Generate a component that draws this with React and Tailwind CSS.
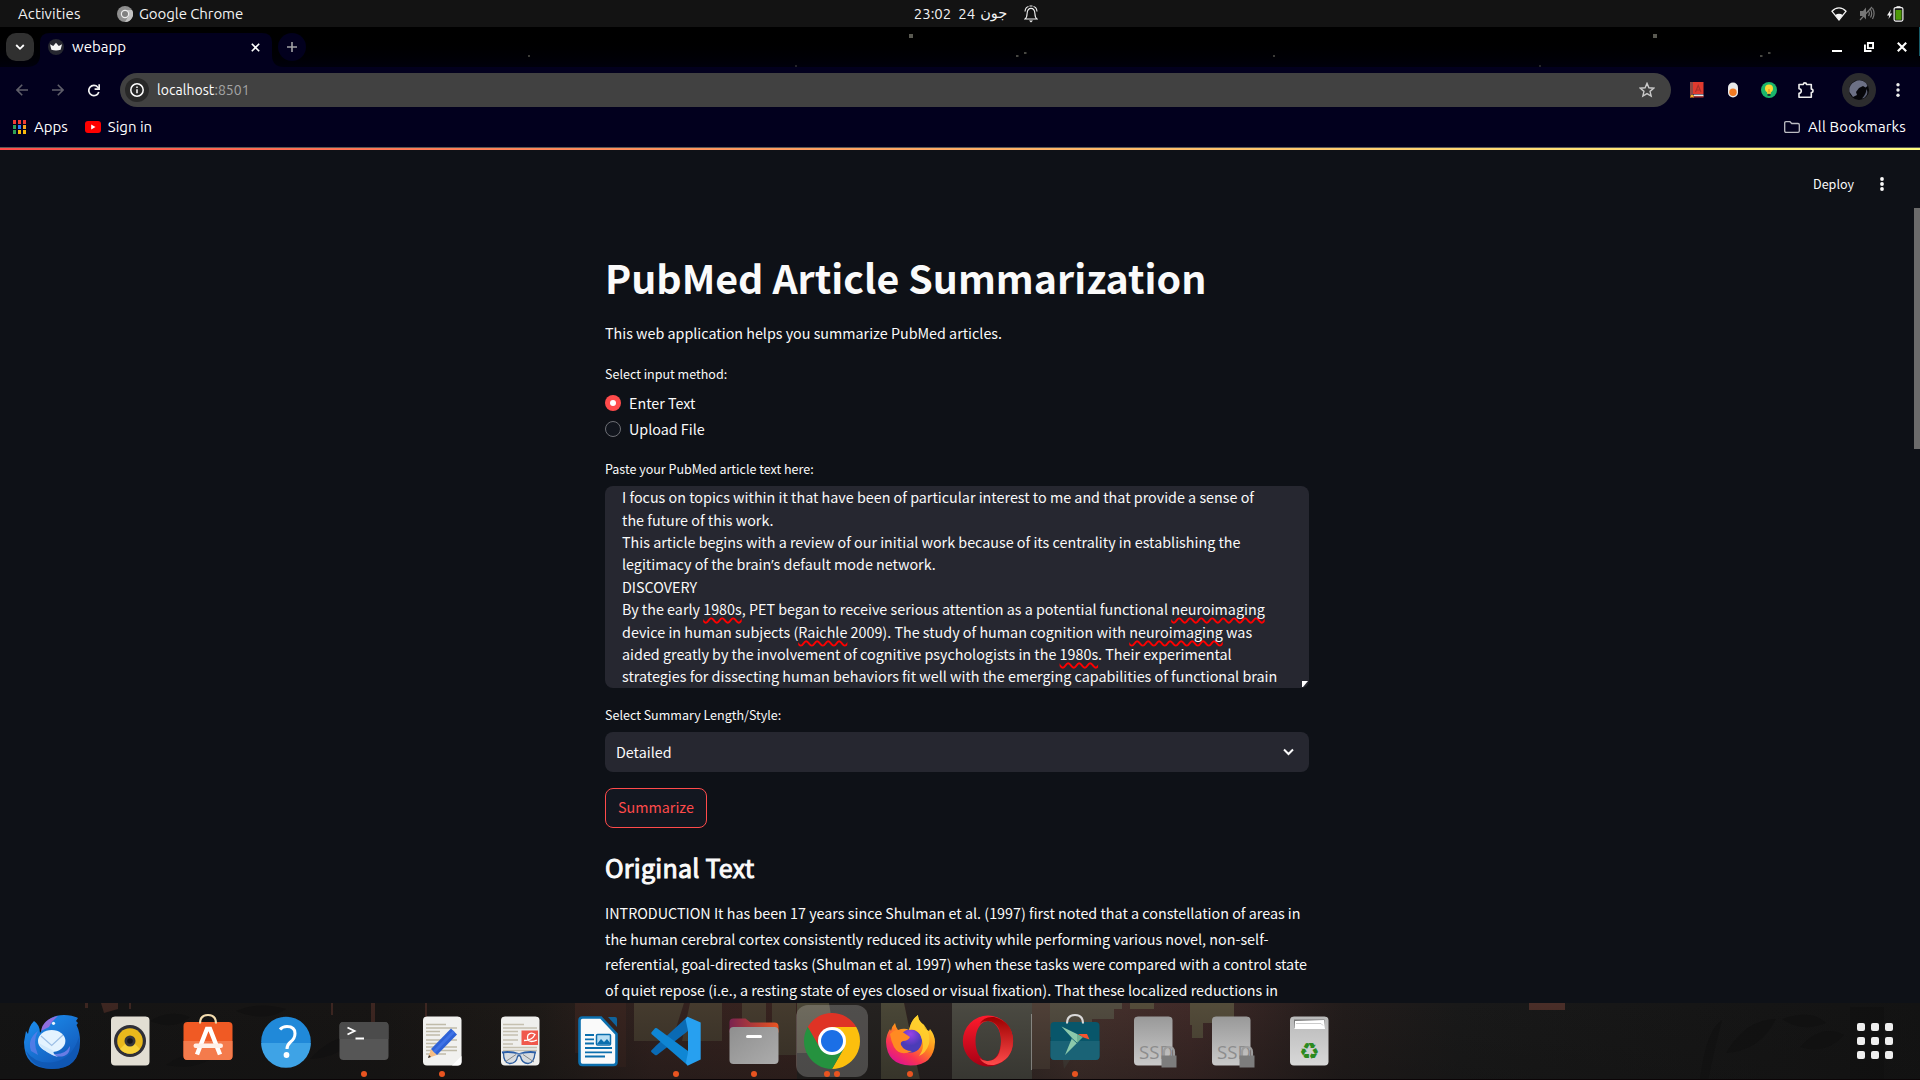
import React from "react";

const UI = "font-[Ubuntu,'Noto_Sans',sans-serif]";
const PAGE = "font-['Noto_Sans_CJK_SC',sans-serif]";

function TopBar() {
  return (
    <div className="grid h-[27px] shrink-0 grid-cols-3 items-center bg-[#131313] text-[15px] leading-[27px] text-[#f2f2f2]">
      <div className="flex items-center pl-[18px]">
        <span className="w-[99px] tracking-[0.1px]">Activities</span>
        <svg className="mr-1.5 h-4 w-4" viewBox="0 0 16 16">
          <circle cx="8" cy="8" r="8" fill="#8f8f8f" />
          <path d="M8 4h7A8 8 0 0 1 8 16l3.5-6z" fill="#c2c2c2" />
          <circle cx="8" cy="8" r="4.2" fill="#ededed" />
          <circle cx="8" cy="8" r="3" fill="#808080" />
        </svg>
        <span className="tracking-[-0.08px]">Google Chrome</span>
      </div>
      <div className="flex items-center justify-center pl-[32px]">
        <span>23:02</span>
        <span className="ml-[7px]">24</span>
        <span className="ml-[5px] font-['DejaVu_Sans'] text-[14.5px]" dir="rtl">جون</span>
        <svg className="ml-[17px] h-[18px] w-[14px]" viewBox="0 0 14 18" fill="none" stroke="#f2f2f2" strokeWidth="1.1">
          <path d="M1 14c1.6-1 2-3 2.1-5.500C3.300 5 4.400 3.400 7 3.400S10.700 5 10.900 8.500C11 11 11.400 13 13 14z" />
          <path d="M1 6.500C1.200 3.800 2.500 2 4.500 1.500M13 6.500C12.800 3.800 11.500 2 9.500 1.500M5.500 1h3" />
          <path d="M5 15.500h4l-2 2z" fill="#f2f2f2" stroke="none" />
        </svg>
      </div>
      <div className="flex items-center justify-end pr-4">
        <svg className="h-[14px] w-4" viewBox="0 0 16 14">
          <path d="M1 4.300C5-.3 11-.3 15 4.300L8 13z" fill="none" stroke="#f2f2f2" strokeWidth="1.300" />
          <path d="M4.300 8C6.500 6.300 9.500 6.300 11.700 8L8 13z" fill="#f2f2f2" />
        </svg>
        <svg className="ml-3 h-[15px] w-4" viewBox="0 0 16 15" fill="none" stroke="#777" strokeWidth="1.200">
          <path d="M1 5h3l3-3.500v12L4 10H1z" fill="#777" stroke="none" />
          <path d="M1 14 13 1M9.500 5c1 1.500 1 3.500 0 5M11.500 3.500c1.500 2.500 1.500 5.500 0 8M13.500 2c2 3.500 2 7.500 0 11" />
        </svg>
        <svg className="ml-3 h-[16px] w-[17px]" viewBox="0 0 17 16">
          <path d="M3.800 3.500 0 9.500h2.200L1.500 13 5.200 7.500H3z" fill="#f2f2f2" />
          <path d="M9.500.2h4v1.500h-4z" fill="#f2f2f2" />
          <rect x="7.100" y="1.600" width="8.800" height="13.500" rx="1.500" fill="#131313" stroke="#f2f2f2" strokeWidth="1.200" />
          <rect x="8.500" y="4" width="6" height="9.800" fill="#4e9a06" />
        </svg>
      </div>
    </div>
  );
}

function TabStrip() {
  return (
    <div className="relative flex h-10 shrink-0 items-center bg-linear-to-b from-black to-[#00000c] pl-1.5">
      <svg className="absolute inset-0 h-10 w-full" viewBox="0 0 1920 40">
        <g fill="#77776c">
          <rect x="909" y="7" width="4" height="4" opacity=".75" />
          <rect x="1653" y="7" width="4" height="4" opacity=".75" />
          <rect x="1016" y="28" width="2.500" height="2" opacity=".6" />
          <rect x="1024" y="25" width="2.500" height="2" opacity=".6" />
          <rect x="1760" y="28" width="2.500" height="2" opacity=".6" />
          <rect x="1768" y="25" width="2.500" height="2" opacity=".6" />
          <rect x="528" y="28" width="2" height="2" opacity=".5" />
          <rect x="795" y="38" width="2" height="2" opacity=".3" />
          <rect x="1273" y="28" width="2" height="2" opacity=".5" />
          <rect x="1539" y="38" width="2" height="2" opacity=".3" />
        </g>
        <rect x="1919" y="0" width="1" height="29" fill="#165b68" />
        <path d="M26 40Q40 40 40 28V15Q40 6 50 6H262Q272 6 272 15V28Q272 40 284 40Z" fill="#02001e" />
      </svg>
      <div className="relative flex h-7 w-7 items-center justify-center rounded-[10px] bg-[#303030]">
        <svg className="h-2 w-[10px]" viewBox="0 0 10 8" fill="none" stroke="#fff" strokeWidth="1.800">
          <path d="m1.200 2 3.800 3.800L8.800 2" />
        </svg>
      </div>
      <div className="relative ml-3.5 flex w-[212px] items-center">
        <svg className="h-4 w-4" viewBox="0 0 16 16">
          <circle cx="8" cy="8" r="8" fill="#262730" />
          <path d="M2 5.200 5.200 7 8 3.700 10.800 7 14 5.200 12.600 10.800Q8 12 3.400 10.800z" fill="#f5f5f5" />
        </svg>
        <span className="ml-2 text-[15px] leading-5 text-white">webapp</span>
        <svg className="ml-auto h-[9px] w-[9px]" viewBox="0 0 9 9" stroke="#fff" strokeWidth="1.600">
          <path d="m.8.8 7.400 7.400M8.200.8.8 8.200" />
        </svg>
      </div>
      <div className="relative ml-[18px] flex h-7 w-7 items-center justify-center rounded-full bg-[#02001e]">
        <svg className="h-[10px] w-[10px]" viewBox="0 0 10 10" stroke="#a2a2a6" strokeWidth="1.600">
          <path d="M5 0v10M0 5h10" />
        </svg>
      </div>
      <div className="relative ml-auto mr-[13px] flex items-center">
        <span className="mt-2 h-[2px] w-2.5 bg-white" />
        <svg className="ml-[22px] h-[10px] w-[10px]" viewBox="0 0 10 10" fill="none" stroke="#fff" strokeWidth="1.900">
          <path d="M3.900.95h5.150v5.150H3.900zM.95 2.500v6.550H7.500" />
        </svg>
        <svg className="ml-[23px] h-[10px] w-[10px]" viewBox="0 0 10 10" stroke="#fff" strokeWidth="2.100">
          <path d="m.8.8 8.400 8.400M9.200.8.8 9.200" />
        </svg>
      </div>
    </div>
  );
}

function Toolbar() {
  return (
    <div className="flex h-[46px] shrink-0 items-center bg-[#02001e]">
      <svg className="ml-4 h-3 w-3" viewBox="0 0 12 12" fill="none" stroke="#5f5e69" strokeWidth="1.600">
        <path d="M12 6H1M6.200.8 1 6l5.200 5.200" />
      </svg>
      <svg className="ml-6 h-3 w-3" viewBox="0 0 12 12" fill="none" stroke="#5f5e69" strokeWidth="1.600">
        <path d="M0 6h11M5.800.8 11 6l-5.200 5.200" />
      </svg>
      <svg className="ml-6 h-[13px] w-3" viewBox="0 0 12 13" fill="none" stroke="#f2f2f2" strokeWidth="1.700">
        <path d="M10.800 8A5.100 5.100 0 1 1 9.800 3.200L11 4.600" />
        <path d="M11.200.3v4.800H6.600" />
      </svg>
      <div className="ml-5 flex h-[34px] w-[1551px] items-center rounded-full bg-[#414141] pl-[5px]">
        <div className="flex h-6 w-6 items-center justify-center rounded-full bg-[#282828]">
          <svg className="h-[14px] w-[14px]" viewBox="0 0 14 14" fill="none" stroke="#fff">
            <circle cx="7" cy="7" r="6.200" strokeWidth="1.500" />
            <path d="M7 6.200v4M7 3.600v1.500" strokeWidth="1.500" />
          </svg>
        </div>
        <span className="ml-2 text-[14px] leading-5 tracking-[0.05px] text-white">localhost<span className="text-[#a5a5a5]">:8501</span></span>
        <svg className="ml-auto mr-4 h-4 w-4" viewBox="0 0 16 16" fill="none" stroke="#c9c9c9" strokeWidth="1.400">
          <path d="m8 1.400 1.900 4.400 4.800.4-3.650 3.150 1.100 4.700L8 11.550 3.850 14.050l1.100-4.700L1.300 6.200l4.800-.4z" />
        </svg>
      </div>
      <svg className="ml-[18px] h-4 w-[15px]" viewBox="0 0 15 16">
        <path d="M1 0h13.500v12H1z" fill="#e03a2e" />
        <path d="M1 0h3v13H1z" fill="#8a4a45" />
        <path d="M4.500 12.500h10v2h-10z" fill="#e8e8e8" />
        <path d="M1 14.300h13.500v1.200H1z" fill="#b92a22" />
        <path d="M1.500 13h3v3L3 15l-1.500 1z" fill="#f0b429" />
        <path d="m6.500 10 2.700-6.500L12 10M7.500 8h3.500" fill="none" stroke="#a8302a" strokeWidth="1.100" />
      </svg>
      <svg className="ml-[23px] h-4 w-[12px]" viewBox="0 0 12 16">
        <rect x="1" y=".5" width="10" height="15" rx="5" fill="#e9e9e9" />
        <circle cx="6" cy="10.300" r="3.700" fill="#f17a22" />
      </svg>
      <svg className="ml-[22px] h-4 w-4" viewBox="0 0 16 16">
        <circle cx="8" cy="8" r="8" fill="#1bb56b" />
        <circle cx="8" cy="6.500" r="4" fill="#fcd535" />
        <path d="M6 9.500h4v2.300H6z" fill="#f3c130" />
        <path d="M6.500 12h3v2h-3z" fill="#1c3c34" />
        <path d="M8 7v3" stroke="#f08c1f" strokeWidth="1.200" />
      </svg>
      <svg className="ml-5 h-[17px] w-[17px]" viewBox="0 0 17 17" fill="none" stroke="#eee" strokeWidth="1.600" strokeLinejoin="round">
        <path d="M2 2.500h4.300a1.600 1.600 0 0 1 3.200 0h4.800v4.600a1.700 1.700 0 0 1 0 3.400v4.700H2v-3.900a2.300 2.300 0 0 0 0-4.600z" />
      </svg>
      <div className="ml-7 flex h-[34px] w-[34px] items-center justify-center rounded-full bg-[#2c2c2e]">
        <svg className="h-5 w-5" viewBox="0 0 20 20">
          <circle cx="10" cy="10" r="10" fill="#06060a" />
          <path d="M.5 12A10 10 0 0 1 17 3l1.500 3-2 1.500L14 6l-4 2-3 4 1 3-4 2z" fill="#6c7085" />
          <path d="M17.500 9q2 4-.5 7-2 2.500-4 2.500 4-4 4.500-9.500z" fill="#5a5f73" />
        </svg>
      </div>
      <svg className="ml-5 h-[14px] w-[4px]" viewBox="0 0 4 14" fill="#eee">
        <circle cx="2" cy="1.800" r="1.700" /><circle cx="2" cy="7" r="1.700" /><circle cx="2" cy="12.200" r="1.700" />
      </svg>
    </div>
  );
}

const APP_DOTS = [
  "bg-[#f23c32]", "bg-[#f23c32]", "bg-[#f23c32]",
  "bg-[#2fa156]", "bg-[#2d7df6]", "bg-[#f6a51c]",
  "bg-[#2fa156]", "bg-[#f9b90c]", "bg-[#f9b90c]",
];

function BookmarksBar() {
  return (
    <div className="flex h-[34px] shrink-0 items-center bg-[#02001e] pb-[6px] text-[15px] leading-5 text-white">
      <div className="ml-[13px] grid grid-cols-3 gap-x-[2px] gap-y-px">
        {APP_DOTS.map((c, i) => (
          <span key={i} className={"h-1 w-[3px] " + c} />
        ))}
      </div>
      <span className="ml-2">Apps</span>
      <svg className="ml-[17px] h-3 w-4" viewBox="0 0 16 12">
        <rect width="16" height="12" rx="3" fill="#f00" />
        <path d="m6.200 3.500 4.300 2.500-4.300 2.500z" fill="#fff" />
      </svg>
      <span className="ml-[7px]">Sign in</span>
      <svg className="ml-auto h-3 w-4" viewBox="0 0 16 12" fill="none" stroke="#bcbcc2" strokeWidth="1.300">
        <path d="M.7 2Q.7.700 2 .7h4l1.700 1.800H14q1.300 0 1.300 1.300V10q0 1.300-1.300 1.300H2Q.7 11.300.7 10z" />
      </svg>
      <span className="ml-2 mr-[14px] tracking-[0.15px]">All Bookmarks</span>
    </div>
  );
}

function Wavy({ children }) {
  return <span className="underline decoration-[#ff0000] decoration-wavy decoration-[1.6px] underline-offset-[1.5px] [text-decoration-skip-ink:none]">{children}</span>;
}

function Radio({ label, checked }) {
  return (
    <div className="flex h-[26px] items-center">
      {checked ? (
        <span className="flex h-4 w-4 items-center justify-center rounded-full bg-[#ff4b4b]">
          <span className="h-1.5 w-1.5 rounded-full bg-white" />
        </span>
      ) : (
        <span className="h-4 w-4 rounded-full border border-[#6d6f75] bg-[#11151d]" />
      )}
      <span className="ml-2 text-[14.32px] leading-[26px]">{label}</span>
    </div>
  );
}

function WebPage() {
  return (
    <div className={"relative flex-1 overflow-hidden bg-[#0e1117] text-[#fafafa] " + PAGE}>
      <div className="h-px bg-[#5a5957]" />
      <div className="h-0.5 bg-linear-to-r from-[#ff4b4b] to-[#fffd80]" />
      <header className="flex h-[60px] items-center justify-end pt-2 pr-9">
        <span className="text-[12.53px] leading-5">Deploy</span>
        <svg className="ml-[26px] h-[14px] w-[4px]" viewBox="0 0 4 14" fill="#fafafa">
          <circle cx="2" cy="2" r="1.900" /><circle cx="2" cy="7" r="1.900" /><circle cx="2" cy="12" r="1.900" />
        </svg>
      </header>
      <div className="absolute right-0 top-[61px] h-[241px] w-[6px] bg-[#6b6b6b]" />
      <main className="ml-[605px] w-[704px] whitespace-nowrap pt-[41px]">
        <h1 className="h-[52px] text-[39.36px] font-bold leading-[52px]">PubMed Article Summarization</h1>
        <p className="mt-[17px] text-[14.32px] leading-[26px]">This web application helps you summarize PubMed articles.</p>
        <p className="mt-[18px] text-[12.53px] leading-5">Select input method:</p>
        <div className="mt-1.5">
          <Radio label="Enter Text" checked />
          <Radio label="Upload File" />
        </div>
        <p className="mt-[17px] text-[12.53px] leading-5">Paste your PubMed article text here:</p>
        <div className="relative mt-[7px] h-[202px] overflow-hidden rounded-lg bg-[#262730] pl-[17px] pt-[0.2px] text-[14.33px] leading-[22.4px]">
          <div>I focus on topics within it that have been of particular interest to me and that provide a sense of</div>
          <div>the future of this work.</div>
          <div>This article begins with a review of our initial work because of its centrality in establishing the</div>
          <div>legitimacy of the brain<span className="font-['Noto_Sans'] text-[13.5px] leading-none">’</span>s default mode network.</div>
          <div>DISCOVERY</div>
          <div>By the early <Wavy>1980s</Wavy>, PET began to receive serious attention as a potential functional <Wavy>neuroimaging</Wavy></div>
          <div>device in human subjects (<Wavy>Raichle</Wavy> 2009). The study of human cognition with <Wavy>neuroimaging</Wavy> was</div>
          <div>aided greatly by the involvement of cognitive psychologists in the <Wavy>1980s</Wavy>. Their experimental</div>
          <div>strategies for dissecting human behaviors fit well with the emerging capabilities of functional brain</div>
          <svg className="absolute bottom-[1px] right-[1px] h-[6px] w-[6px]" viewBox="0 0 6 6"><path d="M0 0h6L1 6H0z" fill="#fff" /></svg>
        </div>
        <p className="mt-[17px] text-[12.53px] leading-5">Select Summary Length/Style:</p>
        <div className="mt-[7px] flex h-10 items-center justify-between rounded-lg bg-[#262730] pl-[11px] pr-[15px]">
          <span className="text-[14.32px] leading-6">Detailed</span>
          <svg className="h-2 w-[11px]" viewBox="0 0 11 8" fill="none" stroke="#fafafa" strokeWidth="2">
            <path d="m1 1.500 4.500 4.500L10 1.500" />
          </svg>
        </div>
        <button className="mt-4 block h-10 w-[102px] rounded-lg border border-[#ff4b4b] bg-[#131720] pb-0.5 text-[14.32px] leading-6 text-[#ff4b4b]">Summarize</button>
        <h3 className="mt-[22px] text-[25.06px] font-normal leading-[34px] tracking-[0.24px] [-webkit-text-stroke:1px_#fafafa]">Original Text</h3>
        <div className="mt-4 text-[14.33px] leading-[25.6px]">
          <div>INTRODUCTION It has been 17 years since Shulman et al. (1997) first noted that a constellation of areas in</div>
          <div>the human cerebral cortex consistently reduced its activity while performing various novel, non-self-</div>
          <div>referential, goal-directed tasks (Shulman et al. 1997) when these tasks were compared with a control state</div>
          <div>of quiet repose (i.e., a resting state of eyes closed or visual fixation). That these localized reductions in</div>
        </div>
      </main>
    </div>
  );
}

function Wallpaper() {
  return (
    <svg className="absolute inset-0 h-full w-full" viewBox="0 0 1920 77" preserveAspectRatio="none">
      <defs>
        <linearGradient id="wp" x1="0" x2="1">
          <stop offset="0" stopColor="#141414" />
          <stop offset=".2" stopColor="#171514" />
          <stop offset=".28" stopColor="#1e1a17" />
          <stop offset=".34" stopColor="#33221f" />
          <stop offset=".42" stopColor="#38231f" />
          <stop offset=".5" stopColor="#2b2321" />
          <stop offset=".56" stopColor="#45322d" />
          <stop offset=".62" stopColor="#402a28" />
          <stop offset=".7" stopColor="#221c1b" />
          <stop offset=".76" stopColor="#191919" />
          <stop offset="1" stopColor="#131313" />
        </linearGradient>
        <linearGradient id="wps" x1="0" y1="0" x2="0" y2="1">
          <stop offset="0" stopColor="#111" stopOpacity="0" />
          <stop offset="1" stopColor="#111" stopOpacity=".35" />
        </linearGradient>
      </defs>
      <rect width="1920" height="77" fill="url(#wp)" />
      <g fill="#3d2621">
        <path d="M85 0h3v5h-3zM101 0h17v6l-14 4zM129 0h2v6h-2zM331 0h2v12h-2zM371 0h4v24h-4zM425 0h2v26h-2z" />
        <path d="M575 0h51v64h-16V50h-35z" opacity=".7" />
        <path d="M1529 0h36v7h-36z" fill="#4a2e28" />
      </g>
      <path d="M634 0h50l-12 38H634zM690 0h32v38h-40zM742 0h24v38h-24zM772 0h24v52h-24z" fill="#453b2e" />
      <path d="M797 0h84v77h-84z" fill="#252220" />
      <path d="M797 0h32l8 50H797z" fill="#4b4636" />
      <path d="M881 0h23l16 77h-39z" fill="#4a4737" />
      <path d="M905 0h47v77h-31z" fill="#2a2322" />
      <path d="M952 0h80v77h-80z" fill="#4b4a42" />
      <path d="M1032 0h18v66h-18z" fill="#4f4037" />
      <path d="M1050 0h72v6h-8v10h-22v18H1050z" fill="#524c40" />
      <path d="M1130 0h24v6h-24zM1190 0h44v20h-31v15h-11V22h-2z" fill="#544c3a" />
      <path d="M1060 34h12v20l-8 12z" fill="#4a4740" opacity=".7" />
      <g fill="#0e0e0e" opacity=".5">
        <path d="M20 44q24-18 50-12-20 18-50 12zM150 18q20-12 40-4-16 14-40 4zM236 8q24-10 50-2-20 14-50 2zM310 56q20-22 44-24-10 22-44 24zM166 62q24-18 48-8-20 14-48 8z" />
        <path d="M1700 77q6-50 22-60-8 30-14 60zM1726 50q20-34 50-34-16 32-50 34zM1782 16q30-10 44 4-24 10-44-4zM1800 44q22-24 44-12-18 20-44 12zM1850 4h34v73h-34z" />
      </g>
      <rect width="1920" height="77" fill="url(#wps)" />
      <rect y="76" width="1920" height="1" fill="#0b0507" />
    </svg>
  );
}

function Glyph({ children }) {
  return <svg className="h-14 w-14 overflow-visible" viewBox="0 0 56 56">{children}</svg>;
}

const Thunderbird = (
  <Glyph>
    <defs>
      <linearGradient id="tb" x1="0" y1="0" x2=".7" y2="1"><stop offset="0" stopColor="#1d93f3" /><stop offset="1" stopColor="#1257b8" /></linearGradient>
    </defs>
    <path d="M10 8Q16 12 16 20L19 15Q24 2 40 2 48 2 54 5L52 8 54 10 52.500 12Q56 19 56 28 56 56 28 56 0 56 0 29L2 18 4 21Q5 13 10 8z" fill="url(#tb)" />
    <path d="M2 38Q12 52 30 49 48 46 55 24 58 56 28 56 8 55 2 38z" fill="#0f55b0" opacity=".75" />
    <path d="M17 18Q19 6 34 3 27 9 25 14z" fill="#8f6fe0" />
    <path d="M7 38Q3 26 14 18 8 28 14 42z" fill="#5e7de8" opacity=".8" />
    <path d="M25 40Q40 44 46 33 46 46 30 43z" fill="#7d83ee" opacity=".8" />
    <ellipse cx="27.700" cy="28" rx="13.700" ry="11" fill="#e4f3ff" />
    <path d="M14.500 30Q20 40 34 44 28 41 30 38z" fill="#cfe8fd" />
    <path d="m17 23 10.700 9.500L39 22" fill="none" stroke="#9dbfe6" strokeWidth="1.200" />
    <circle cx="29.500" cy="10.300" r="1.600" fill="#e8f5ff" />
  </Glyph>
);

const Rhythmbox = (
  <Glyph>
    <rect x="9" y="3.500" width="38.500" height="49" rx="4" fill="#e2ded3" />
    <circle cx="28" cy="28" r="16" fill="#2f2f38" />
    <circle cx="28" cy="28" r="12.800" fill="#e9b91c" />
    <path d="M18 36a12.800 12.800 0 0 0 20 0l-6-6h-8z" fill="#f7d23a" />
    <circle cx="28" cy="28" r="5.500" fill="#35363a" />
    <circle cx="28" cy="28" r="2.800" fill="#15161a" />
  </Glyph>
);

const Software = (
  <Glyph>
    <rect x="3.500" y="9" width="49" height="38" rx="4" fill="#f05a24" />
    <path d="M3.500 28h49v15q0 4-4 4h-41q-4 0-4-4z" fill="#f47b4c" />
    <path d="M20 10.500q0-8.500 8-8.500t8 8.500" fill="none" stroke="#f3dcae" strokeWidth="2" />
    <path d="M17 41.500 27 16h3l10 25.500" fill="none" stroke="#fff" strokeWidth="4.400" />
    <rect x="13.500" y="30.500" width="29.500" height="4.500" rx="2.200" fill="#fff0e8" />
  </Glyph>
);

const Help = (
  <Glyph>
    <circle cx="28" cy="28.500" r="24.800" fill="#2089d9" />
    <path d="M3.200 30a24.800 24.800 0 0 0 49.600 0z" fill="#3ea3e6" />
    <path d="M22 16.500q2.500-3 7-3 8 0 8 7 0 5-4.500 8.500-3.500 3-3.500 7" fill="none" stroke="#fff" strokeWidth="3" />
    <circle cx="28.500" cy="42" r="2.900" fill="#fff" />
  </Glyph>
);

const Terminal = (
  <Glyph>
    <rect x="3.500" y="9" width="49" height="38" rx="4" fill="#565656" />
    <path d="M3.500 26V13q0-4 4-4h41q4 0 4 4v13z" fill="#4b4b4b" />
    <path d="m11.500 14.500 7 3.500-7 3.500M19.500 25.500H28" fill="none" stroke="#fff" strokeWidth="1.900" />
  </Glyph>
);

const Gedit = (
  <Glyph>
    <rect x="9" y="3.500" width="38.500" height="49" rx="4" fill="#f1f1ef" />
    <path d="M12 11.500h20M12 15h31M12 18.500h14M12 22h14M12 27h31M12 30.500h14M12 34h31M12 37.500h31M12 41h20" stroke="#c0bba9" strokeWidth="1.300" />
    <path d="M14 45 17 36l6 6z" fill="#f5bd83" />
    <path d="M17 36 37 15.500l6 6L23 42z" fill="#2f62d6" />
    <path d="M19 38 39 17.500l2 2L21 40z" fill="#3f72e6" />
    <path d="m14 45 1-3 2 2z" fill="#333" />
    <path d="M38 52.500 47.500 43v6q0 3.500-4 3.500z" fill="#fff" />
  </Glyph>
);

const DocViewer = (
  <Glyph>
    <rect x="9" y="3.500" width="38.500" height="49" rx="4" fill="#efefed" />
    <path d="M11 11.500h21M11 15h34M11 18.500h15M11 22h15M11 27h15M11 31h10M11 34.500h34M11 37.500h34" stroke="#c5c0b0" strokeWidth="1.400" />
    <rect x="29.500" y="17.500" width="16.500" height="14.500" fill="#f0584c" />
    <path d="M32 27.500q8 0 11-6-4-3-7 .5-2 5 3 6.500 3 0 6-1.500" fill="none" stroke="#fff" strokeWidth="1.300" />
    <path d="M10 39.500Q18 38 27 41q9-3 17-1.500" fill="none" stroke="#2a5ea8" strokeWidth="1.800" />
    <path d="M11.500 40q0 10.500 6.500 10.500t7.500-7q1.500-2 3 0 1.500 7 7.500 7T43 40" fill="#a9b7c9" fillOpacity=".35" stroke="#2c5c9e" strokeWidth="1.300" />
    <path d="M13 49 24 41.500M31 41.500 42 49" stroke="#888" strokeWidth="1" />
  </Glyph>
);

const Writer = (
  <Glyph>
    <path d="M12.500 4.500H31L46.500 21v28q0 3-3 3h-31q-3 0-3-3V7.500q0-3 3-3z" fill="#fafafa" stroke="#0c6fae" strokeWidth="2.600" />
    <path d="M38 4h7q2 0 2 2v8z" fill="#0f639c" />
    <path d="M15 22h9M15 26.300h9M15 30.500h9M15 35h27M15 39.300h27M15 43.500h20" stroke="#0c6fae" strokeWidth="1.800" />
    <rect x="26.500" y="21.500" width="14" height="10.500" rx="1" fill="#b8def3" stroke="#0c6fae" strokeWidth="1.500" />
    <path d="m27 31 4-5 3 3 3-3 4 5z" fill="#0c6fae" />
  </Glyph>
);

const VSCode = (
  <Glyph>
    <path d="M39.500 3.800 7.700 33 3.300 37.500q-.5 1 0 1.500l3.700 3q1 .5 2 0L40 18z" fill="#0a6ab4" />
    <path d="M39.500 52.200 3.500 21q-.5-1 0-1.700L7 15.300q1-.5 2 0L40 38z" fill="#0f86d4" />
    <path d="M39.500 3.800 52.700 9.500v37L39.500 52.700 38 50 40 38V18L37.500 6z" fill="#27a0f0" />
  </Glyph>
);

const Files = (
  <Glyph>
    <defs>
      <linearGradient id="fl"><stop offset="0" stopColor="#7a2350" /><stop offset="1" stopColor="#ea5420" /></linearGradient>
      <linearGradient id="fg" x1="0" y1="0" x2="1" y2="1"><stop offset="0" stopColor="#8f8f8f" /><stop offset="1" stopColor="#acacac" /></linearGradient>
    </defs>
    <path d="M3.500 9q0-3.500 4-3.500h12l5 4h24q4 0 4 4v6h-49z" fill="url(#fl)" />
    <rect x="3.500" y="14" width="49" height="37" rx="4" fill="url(#fg)" />
    <rect x="20" y="22" width="16" height="3" rx="1.500" fill="#fff" />
  </Glyph>
);

const Chrome = (
  <Glyph>
    <path d="M3.750 14A28 28 0 0 1 52.250 14H28L15.900 35z" fill="#df3325" />
    <path d="M52.250 14A28 28 0 0 1 28 56L40.100 35 28 14z" fill="#fcbf0d" />
    <path d="M28 56A28 28 0 0 1 3.750 14L15.900 35 28 42 40.100 35z" fill="#25923f" />
    <circle cx="28" cy="28" r="14" fill="#fff" />
    <circle cx="28" cy="28" r="11" fill="#1b6fe6" />
  </Glyph>
);

const Firefox = (
  <Glyph>
    <defs>
      <linearGradient id="ff" x1=".8" y1=".1" x2=".25" y2=".95"><stop offset="0" stopColor="#ffe22e" /><stop offset=".45" stopColor="#ff8a1d" /><stop offset=".75" stopColor="#fb3550" /><stop offset="1" stopColor="#e0168b" /></linearGradient>
      <radialGradient id="fp" cx=".5" cy=".2"><stop offset="0" stopColor="#9a42e8" /><stop offset="1" stopColor="#4b3cb8" /></radialGradient>
    </defs>
    <path d="M13 10Q14 15 16 17l3-1Q24 15 27 17L28 14Q30 6 36 2 36 8 42 12L43 16 47 18 48 16Q53 22 53 29 52 52.500 28.500 52.500 5 52 4 29 4 22 8 16L9 18Q10 13 13 10z" fill="url(#ff)" />
    <circle cx="28.500" cy="28" r="11.500" fill="url(#fp)" />
    <path d="M8 21Q14 15 19 18L28 24Q26 28 21 28 18 29 19 32 22 38 30 38 18 44 12 34 9 28 8 21z" fill="#ff8a22" />
    <path d="M36 2Q36 8 42 12 49 20 47 31q-3 9-10 12 6-8 3-16Q38 19 33 17q-4-1-6 0Q29 7 36 2z" fill="#ffd02e" opacity=".85" />
  </Glyph>
);

const Opera = (
  <Glyph>
    <defs><linearGradient id="op" x1="0" y1="0" x2="0" y2="1"><stop offset="0" stopColor="#ff1b2d" /><stop offset="1" stopColor="#a70014" /></linearGradient>
      <linearGradient id="oq" x1="0" y1="0" x2="0" y2="1"><stop offset="0" stopColor="#9c0000" /><stop offset="1" stopColor="#ff4b4b" /></linearGradient></defs>
    <path fillRule="evenodd" d="M28 2.500a25.200 25.500 0 1 0 0 51 25.200 25.500 0 1 0 0-51zM28 8c7.500 0 13 9 13 20s-5.500 20-13 20-12.500-9-12.500-20S20.500 8 28 8z" fill="url(#op)" />
    <path d="M19.500 11Q23 7.500 28 8 41 9 41 28T28 48q-5 .5-8.500-3Q24 53 34 52 53 47 53 28T34 4Q24 3 19.500 11z" fill="url(#oq)" />
  </Glyph>
);

const SnapStore = (
  <Glyph>
    <rect x="3.500" y="9" width="49" height="38" rx="4" fill="#08566a" />
    <path d="M3.500 28h49v15q0 4-4 4h-41q-4 0-4-4z" fill="#1a6376" />
    <path d="M20 10.500q0-8.500 8-8.500t8 8.500" fill="none" stroke="#d9d9d9" strokeWidth="2" />
    <path d="M14.500 13.500 30 21v9L18 42l7-17z" fill="#8bc9ab" />
    <path d="M30 21v9l6-6z" fill="#6fb394" />
    <path d="M31 21h9l2.500 5.500-6-2z" fill="#f6532f" />
    <path d="M25 25.500 30 30" stroke="#08566a" strokeWidth=".8" />
  </Glyph>
);

function Ssd({ id }) {
  return (
    <Glyph>
      <defs><linearGradient id={id} x1="0" y1="0" x2="0" y2="1"><stop offset="0" stopColor="#999" /><stop offset="1" stopColor="#c9c9c9" /></linearGradient></defs>
      <rect x="9" y="3.500" width="38.500" height="49" rx="4" fill={"url(#" + id + ")"} />
      <text x="14" y="46" className="font-['Open_Sans'] text-[18.5px]" fill="#8d8d8d" textLength="34" lengthAdjust="spacingAndGlyphs">SSD</text>
      <path d="M39 43v-4q0-5 5-5t5 5v4" fill="none" stroke="#9c9c9c" strokeWidth="2.200" />
      <path d="M36.500 42.500h15v12h-15z" fill="#7d7d7d" />
    </Glyph>
  );
}

const Trash = (
  <Glyph>
    <defs><linearGradient id="tr" x1="0" y1="0" x2="0" y2="1"><stop offset="0" stopColor="#b9b9b9" /><stop offset="1" stopColor="#d8d8d8" /></linearGradient></defs>
    <rect x="9" y="3.500" width="38.500" height="49" rx="4" fill="url(#tr)" />
    <path d="M13 6.500h30.500V15H13z" fill="#777" />
    <path d="m14 8 29-1 1 9H13.500z" fill="#fff" />
    <path d="M15 10.500h25l2 2" fill="none" stroke="#ccc" />
    <text x="28.300" y="46" textAnchor="middle" fill="#2b8a1f" className="font-['DejaVu_Sans'] text-[23px]">♻</text>
  </Glyph>
);

const LEFT = [
  [Thunderbird, 0], [Rhythmbox, 0], [Software, 0], [Help, 0], [Terminal, 1], [Gedit, 1], [DocViewer, 0],
  [Writer, 0], [VSCode, 1], [Files, 1], [Chrome, 2, true], [Firefox, 1], [Opera, 0],
];
const RIGHT = [[SnapStore, 1], [<Ssd id="s1" />, 0], [<Ssd id="s2" />, 0], [Trash, 0]];

function DockItem({ item }) {
  const [icon, dots, active] = item;
  return (
    <div className="relative flex h-[77px] w-[78px] items-center justify-center pb-px">
      <div className={"flex h-[72px] w-[72px] items-center justify-center rounded-xl " + (active ? "bg-white/20" : "")}>{icon}</div>
      <div className="absolute bottom-[3px] flex gap-1">
        {Array.from({ length: dots }, (_, i) => (
          <span key={i} className="h-1.5 w-1.5 rounded-full bg-[#e95420]" />
        ))}
      </div>
    </div>
  );
}

function Dock() {
  return (
    <div className="relative h-[77px] shrink-0">
      <Wallpaper />
      <div className="relative flex h-full items-center pl-[13px]">
        {LEFT.map((it, i) => <DockItem key={i} item={it} />)}
        <span className="ml-1 mr-1 h-14 w-px bg-white/35" />
        {RIGHT.map((it, i) => <DockItem key={i} item={it} />)}
        <div className="mb-[2px] ml-auto mr-[27px] grid grid-cols-3 gap-[6px]">
          {Array.from({ length: 9 }, (_, i) => (
            <span key={i} className="h-2 w-2 rounded-[2px] bg-[#eee]" />
          ))}
        </div>
      </div>
    </div>
  );
}

export default function App() {
  return (
    <div className={"flex h-[1080px] w-[1920px] flex-col overflow-hidden bg-[#02001e] " + UI}>
      <TopBar />
      <TabStrip />
      <Toolbar />
      <BookmarksBar />
      <WebPage />
      <Dock />
    </div>
  );
}
